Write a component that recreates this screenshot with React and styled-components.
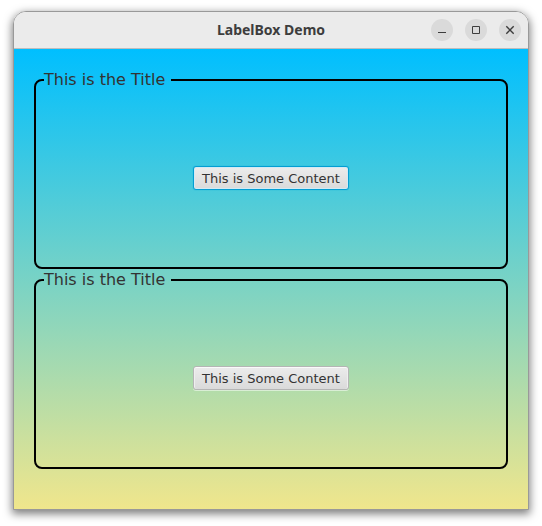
import React from "react";
import styled, { createGlobalStyle } from "styled-components";

const GlobalStyle = createGlobalStyle`
  *, *::before, *::after {
    box-sizing: border-box;
  }
  body {
    margin: 0;
    background: #ffffff;
    font-family: "DejaVu Sans", Verdana, sans-serif;
  }
`;

const Desktop = styled.div`
  display: flex;
  min-height: 100vh;
  padding: 11px 13px 16px;
`;

const AppWindow = styled.section`
  display: flex;
  flex: 1;
  flex-direction: column;
  min-width: 0;
  border: 1px solid rgba(0, 0, 0, 0.4);
  border-radius: 13px 13px 0 0;
  background-clip: padding-box;
  box-shadow: 0 3px 9px 1px rgba(0, 0, 0, 0.5);
  overflow: hidden;
`;

const TitleBar = styled.header`
  display: grid;
  grid-template-columns: 1fr auto 1fr;
  align-items: center;
  height: 37px;
  padding: 0 7px;
  border-bottom: 1px solid #bdbdbd;
  background: #ebebeb;
`;

const WindowTitle = styled.h1`
  grid-column: 2;
  margin: 0;
  color: #3d3d3d;
  font-family: "Noto Sans", sans-serif;
  font-size: 14px;
  font-weight: 700;
  line-height: 20px;
`;

const WindowControls = styled.div`
  display: flex;
  justify-content: flex-end;
  gap: 12px;
`;

const ControlButton = styled.button`
  display: grid;
  place-items: center;
  width: 22px;
  height: 22px;
  padding: 0;
  border: 0;
  border-radius: 50%;
  background: #dadada;
  color: #3d3d3d;
`;

const Scene = styled.main`
  display: flex;
  flex: 1;
  flex-direction: column;
  padding: 20px 20px 40px;
  background: linear-gradient(#00bfff, #f0e68c);
`;

const LabelBox = styled.fieldset`
  display: grid;
  flex: 1;
  place-items: center;
  min-width: 0;
  min-height: 120px;
  margin: 0;
  padding: 0 8px 2px;
  border: 2px solid #000000;
  border-radius: 8px;
`;

const BoxTitle = styled.legend`
  padding: 0 6px 0 0;
  color: #333333;
  font-size: 16px;
  line-height: 22px;
`;

const ContentButton = styled.button`
  height: 24px;
  padding: 2px 8px 0;
  border: 1px solid ${(p) => (p.$focused ? "#039ed3" : "#b5b5b5")};
  border-radius: 3px;
  outline: none;
  background: linear-gradient(#ececec, #dadada);
  box-shadow: ${(p) =>
    p.$focused
      ? "inset 0 0 0 1px #d3eaf3, 0 0 1px #039ed3"
      : "inset 0 1px 0 #fafafa, inset 1px 0 0 #efefef, inset -1px 0 0 #efefef, 0 1px 0 rgba(255, 255, 255, 0.5)"};
  color: #333333;
  font-family: inherit;
  font-size: 13px;
  line-height: 20px;
  white-space: nowrap;
`;

function MinimizeIcon() {
  return (
    <svg width="10" height="10" viewBox="0 0 10 10" aria-hidden="true">
      <path d="M1 7.5h8" stroke="currentColor" />
    </svg>
  );
}

function MaximizeIcon() {
  return (
    <svg width="10" height="10" viewBox="0 0 10 10" aria-hidden="true">
      <path d="M1.5 1.5h7v7h-7z" fill="none" stroke="currentColor" />
    </svg>
  );
}

function CloseIcon() {
  return (
    <svg width="10" height="10" viewBox="0 0 10 10" aria-hidden="true">
      <path d="M1.3 1.3l7.4 7.4M8.7 1.3L1.3 8.7" stroke="currentColor" strokeWidth="1.4" />
    </svg>
  );
}

const boxes = [
  { id: "first", title: "This is the Title", content: "This is Some Content", focused: true },
  { id: "second", title: "This is the Title", content: "This is Some Content", focused: false },
];

export default function App() {
  return (
    <>
      <GlobalStyle />
      <Desktop>
        <AppWindow>
          <TitleBar>
            <WindowTitle>LabelBox Demo</WindowTitle>
            <WindowControls>
              <ControlButton type="button" aria-label="Minimize">
                <MinimizeIcon />
              </ControlButton>
              <ControlButton type="button" aria-label="Maximize">
                <MaximizeIcon />
              </ControlButton>
              <ControlButton type="button" aria-label="Close">
                <CloseIcon />
              </ControlButton>
            </WindowControls>
          </TitleBar>
          <Scene>
            {boxes.map((box) => (
              <LabelBox key={box.id}>
                <BoxTitle>{box.title}</BoxTitle>
                <ContentButton type="button" $focused={box.focused}>
                  {box.content}
                </ContentButton>
              </LabelBox>
            ))}
          </Scene>
        </AppWindow>
      </Desktop>
    </>
  );
}
